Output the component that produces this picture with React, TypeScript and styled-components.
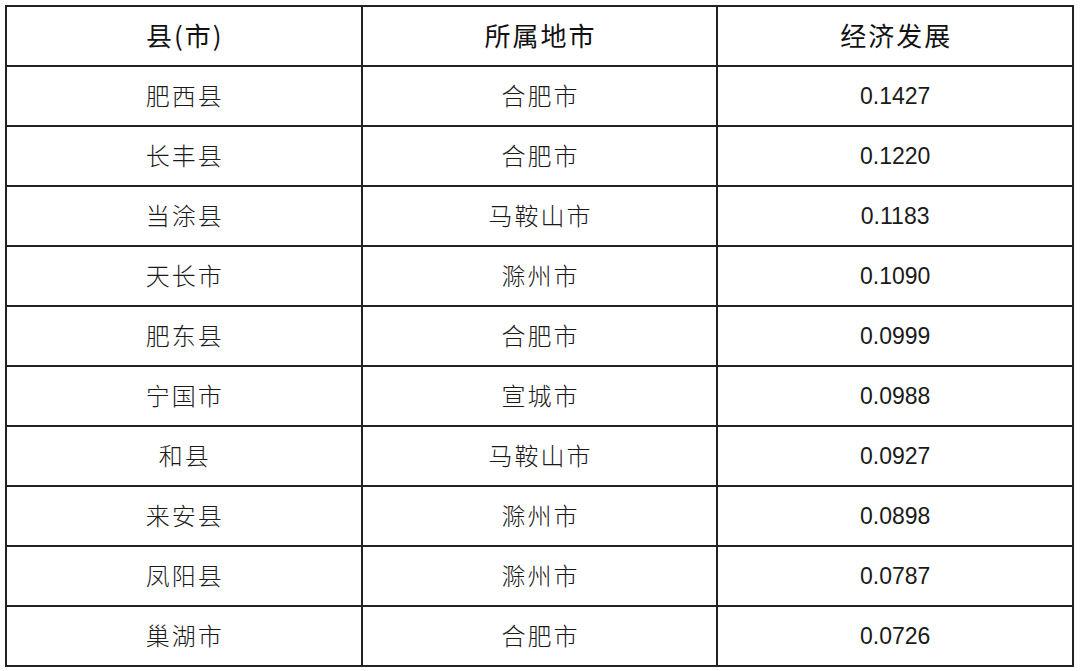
import styled, { createGlobalStyle } from "styled-components";

const GlobalStyle = createGlobalStyle`
    html, body {
        margin: 0;
        padding: 0;
        background: #ffffff;
    }
`

const Page = styled.div`
    width: 1080px;
    height: 671px;
    padding: 5px 6px 0 5px;
    box-sizing: border-box;
    background: #ffffff;
`

const Table = styled.table`
    width: 1069px;
    border-collapse: collapse;
    border: 2px solid #222;
    table-layout: fixed;
`

const HeadCell = styled.th`
    height: 54px;
    border: 2px solid #222;
    padding: 0 0 4px 2px;
    text-align: center;
    vertical-align: middle;
    font-family: "Noto Sans CJK SC", "Noto Sans", sans-serif;
    font-weight: 400;
    font-size: 26px;
    letter-spacing: 2px;
    color: #111;
`

const Cell = styled.td<{ $num?: boolean }>`
    height: ${p => p.$num ? '58px' : '54px'};
    border: 2px solid #222;
    padding: ${p => p.$num ? '0' : '0 0 4px 2px'};
    text-align: center;
    vertical-align: middle;
    color: #1a1a1a;
    font-family: ${p => p.$num ? '"Liberation Sans", Arial, sans-serif' : '"Noto Sans CJK SC", sans-serif'};
    font-size: ${p => p.$num ? '23px' : '24px'};
    font-weight: ${p => p.$num ? 400 : 300};
    letter-spacing: ${p => p.$num ? '0' : '2px'};
`

const rows: [string, string, string][] = [
    ["肥西县", "合肥市", "0.1427"],
    ["长丰县", "合肥市", "0.1220"],
    ["当涂县", "马鞍山市", "0.1183"],
    ["天长市", "滁州市", "0.1090"],
    ["肥东县", "合肥市", "0.0999"],
    ["宁国市", "宣城市", "0.0988"],
    ["和县", "马鞍山市", "0.0927"],
    ["来安县", "滁州市", "0.0898"],
    ["凤阳县", "滁州市", "0.0787"],
    ["巢湖市", "合肥市", "0.0726"],
]

const App = () => {
    return (
        <Page>
            <GlobalStyle />
            <Table>
                <thead>
                    <tr>
                        <HeadCell>县(市)</HeadCell>
                        <HeadCell>所属地市</HeadCell>
                        <HeadCell>经济发展</HeadCell>
                    </tr>
                </thead>
                <tbody>
                    {rows.map(([county, city, score]) => (
                        <tr key={county}>
                            <Cell>{county}</Cell>
                            <Cell>{city}</Cell>
                            <Cell $num>{score}</Cell>
                        </tr>
                    ))}
                </tbody>
            </Table>
        </Page>
    )
}

export default App
